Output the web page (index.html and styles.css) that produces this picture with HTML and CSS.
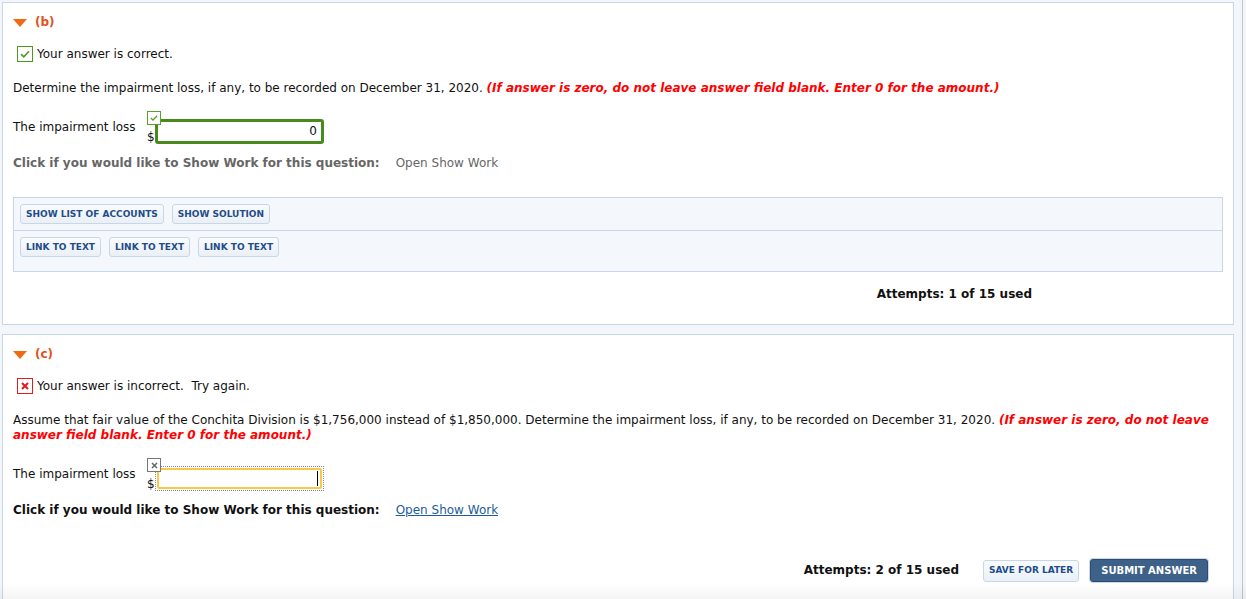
FILE: index.html
```html
<!DOCTYPE html>
<html>
<head>
<meta charset="utf-8">
<link rel="stylesheet" href="styles.css">
</head>
<body>
<div class="page">
  <section class="panel">
    <div class="part-head"><span class="tri"></span><span class="part-label">(b)</span></div>
    <div class="status">
      <span class="status-box ok"><svg width="10" height="8" viewBox="0 0 10 8"><path d="M1 4.2 L3.8 6.8 L9 1.2" fill="none" stroke="#4b9a1e" stroke-width="1.6"/></svg></span>
      <span>Your answer is correct.</span>
    </div>
    <p class="question">Determine the impairment loss, if any, to be recorded on December 31, 2020. <em class="hint">(If answer is zero, do not leave answer field blank. Enter 0 for the amount.)</em></p>
    <div class="answer-row">
      <span class="answer-label">The impairment loss</span>
      <div class="widget">
        <span class="mini ok"><svg width="8" height="6" viewBox="0 0 8 6"><path d="M0.8 3 L3 5 L7.2 0.8" fill="none" stroke="#5aa02a" stroke-width="1.3"/></svg></span>
        <span class="dollar">$</span>
        <div class="input correct">0</div>
      </div>
    </div>
    <div class="showwork muted"><b>Click if you would like to Show Work for this question:</b><span class="sw-link">Open Show Work</span></div>
    <div class="tools">
      <div class="tools-row">
        <span class="btn">SHOW LIST OF ACCOUNTS</span>
        <span class="btn">SHOW SOLUTION</span>
      </div>
      <div class="tools-row last">
        <span class="btn">LINK TO TEXT</span>
        <span class="btn">LINK TO TEXT</span>
        <span class="btn">LINK TO TEXT</span>
      </div>
    </div>
    <div class="attempts-row first"><b>Attempts: 1 of 15 used</b></div>
  </section>

  <section class="panel second">
    <div class="part-head"><span class="tri"></span><span class="part-label">(c)</span></div>
    <div class="status">
      <span class="status-box bad"><svg width="8" height="8" viewBox="0 0 8 8"><path d="M1 1 L7 7 M7 1 L1 7" fill="none" stroke="#e01b1b" stroke-width="2"/></svg></span>
      <span>Your answer is incorrect.&nbsp; Try again.</span>
    </div>
    <p class="question">Assume that fair value of the Conchita Division is $1,756,000 instead of $1,850,000. Determine the impairment loss, if any, to be recorded on December 31, 2020. <em class="hint">(If answer is zero, do not leave answer field blank. Enter 0 for the amount.)</em></p>
    <div class="answer-row">
      <span class="answer-label">The impairment loss</span>
      <div class="widget">
        <span class="mini bad"><svg width="7" height="7" viewBox="0 0 7 7"><path d="M1 1 L6 6 M6 1 L1 6" fill="none" stroke="#666" stroke-width="1.5"/></svg></span>
        <span class="dollar">$</span>
        <div class="input-focus"><div class="input empty"><span class="caret"></span></div></div>
      </div>
    </div>
    <div class="showwork"><b>Click if you would like to Show Work for this question:</b><a class="sw-link link" href="#">Open Show Work</a></div>
    <div class="attempts-row second-row">
      <b>Attempts: 2 of 15 used</b>
      <span class="btn save">SAVE FOR LATER</span>
      <span class="btn submit">SUBMIT ANSWER</span>
    </div>
  </section>
</div>
<div class="bottom-fade"></div>
</body>
</html>
```

FILE: styles.css
```css
html {
  background: #f3f6fa linear-gradient(to right, transparent 1242px, #c4c4c4 1242px, #c4c4c4 1243px, transparent 1243px);
}
body {
  margin: 0;
  padding: 2px;
  font-family: "DejaVu Sans", Verdana, sans-serif;
  font-size: 12px;
  color: #111;
}
.page {
  width: 1232px;
}
.panel {
  background: #fff;
  border: 1px solid #c9d6e6;
  padding: 9px 10px 22px 10px;
}
.panel.second {
  margin-top: 9px;
  padding-bottom: 40px;
}
.part-head {
  display: flex;
  align-items: center;
  height: 20px;
}
.tri {
  width: 0;
  height: 0;
  border-left: 7px solid transparent;
  border-right: 7px solid transparent;
  border-top: 8px solid #f06a12;
  margin-right: 8px;
  margin-top: 2px;
}
.part-label {
  color: #e2501c;
  font-weight: bold;
  font-size: 12px;
}
.status {
  display: flex;
  align-items: center;
  height: 16px;
  margin-top: 14px;
  margin-left: 4px;
}
.status-box {
  width: 14px;
  height: 14px;
  border: 1px solid;
  display: flex;
  align-items: center;
  justify-content: center;
  margin-right: 4px;
  background: #fff;
}
.status-box.ok { border-color: #4b9a1e; }
.status-box.bad { border-color: #e01b1b; }
.question {
  margin: 19px 0 0 0;
  line-height: 15px;
}
.hint {
  color: #ff0000;
  font-weight: bold;
  font-style: italic;
}
.answer-row {
  display: flex;
  align-items: flex-start;
  margin-top: 15px;
}
.answer-label {
  width: 134px;
  margin-top: 8px;
  line-height: 16px;
}
.widget {
  position: relative;
  display: flex;
  align-items: flex-end;
  padding-top: 8px;
}
.mini {
  position: absolute;
  top: 0;
  left: 0;
  width: 12px;
  height: 12px;
  border: 1px solid;
  background: #fff;
  display: flex;
  align-items: center;
  justify-content: center;
  z-index: 2;
}
.mini.ok { border-color: #5aa02a; }
.mini.bad { border-color: #777; }
.dollar {
  width: 8px;
  line-height: 14px;
}
.input {
  box-sizing: border-box;
  width: 169px;
  height: 25px;
  border: 3px solid #4a8a1c;
  border-radius: 3px;
  text-align: right;
  padding-right: 4px;
  line-height: 19px;
  background: #fff;
}
.input-focus {
  border: 1px dotted #888;
  padding: 1px;
}
.input.empty {
  width: 165px;
  height: 21px;
  border: 2px solid #f6c94a;
  border-radius: 2px;
  display: flex;
  justify-content: flex-end;
  align-items: center;
  padding-right: 2px;
}
.caret {
  width: 1px;
  height: 15px;
  background: #000;
}
.showwork {
  margin-top: 12px;
  line-height: 15px;
  color: #111;
}
.showwork.muted { color: #666; }
.sw-link {
  margin-left: 16px;
}
.link {
  color: #1d5c98;
  text-decoration: underline;
}
.tools {
  margin-top: 26px;
  background: #f4f7fb;
  border: 1px solid #c9d6e6;
}
.tools-row {
  display: flex;
  gap: 8px;
  padding: 6px 6px 6px 6px;
  border-bottom: 1px solid #c9d6e6;
}
.tools-row.last {
  border-bottom: none;
  padding-bottom: 14px;
}
.btn {
  box-sizing: border-box;
  height: 20px;
  display: inline-flex;
  align-items: center;
  padding: 0 5px;
  border: 1px solid #c9d6e6;
  border-radius: 3px;
  background: linear-gradient(#f9fbfd, #eaf0f7);
  color: #1f4c8a;
  font-size: 9px;
  font-weight: bold;
  white-space: nowrap;
}
.attempts-row {
  display: flex;
  align-items: center;
  justify-content: flex-end;
  line-height: 15px;
}
.attempts-row.first {
  margin-top: 15px;
  padding-right: 191px;
}
.attempts-row.second-row {
  margin-top: 41px;
  padding-right: 15px;
  height: 23px;
}
.btn.save {
  height: 22px;
  margin-left: 24px;
  padding: 0 5px;
}
.btn.submit {
  height: 23px;
  margin-left: 11px;
  padding: 0 10px;
  font-size: 10px;
  background: #3d6189;
  border: 1px solid #2d4d70;
  box-shadow: 0 0 0 1px #c9d6e6;
  color: #fff;
}
.bottom-fade {
  position: fixed;
  left: 0;
  right: 0;
  bottom: 0;
  height: 16px;
  background: linear-gradient(rgba(0,0,0,0), rgba(0,0,0,0.045));
  pointer-events: none;
}
```
